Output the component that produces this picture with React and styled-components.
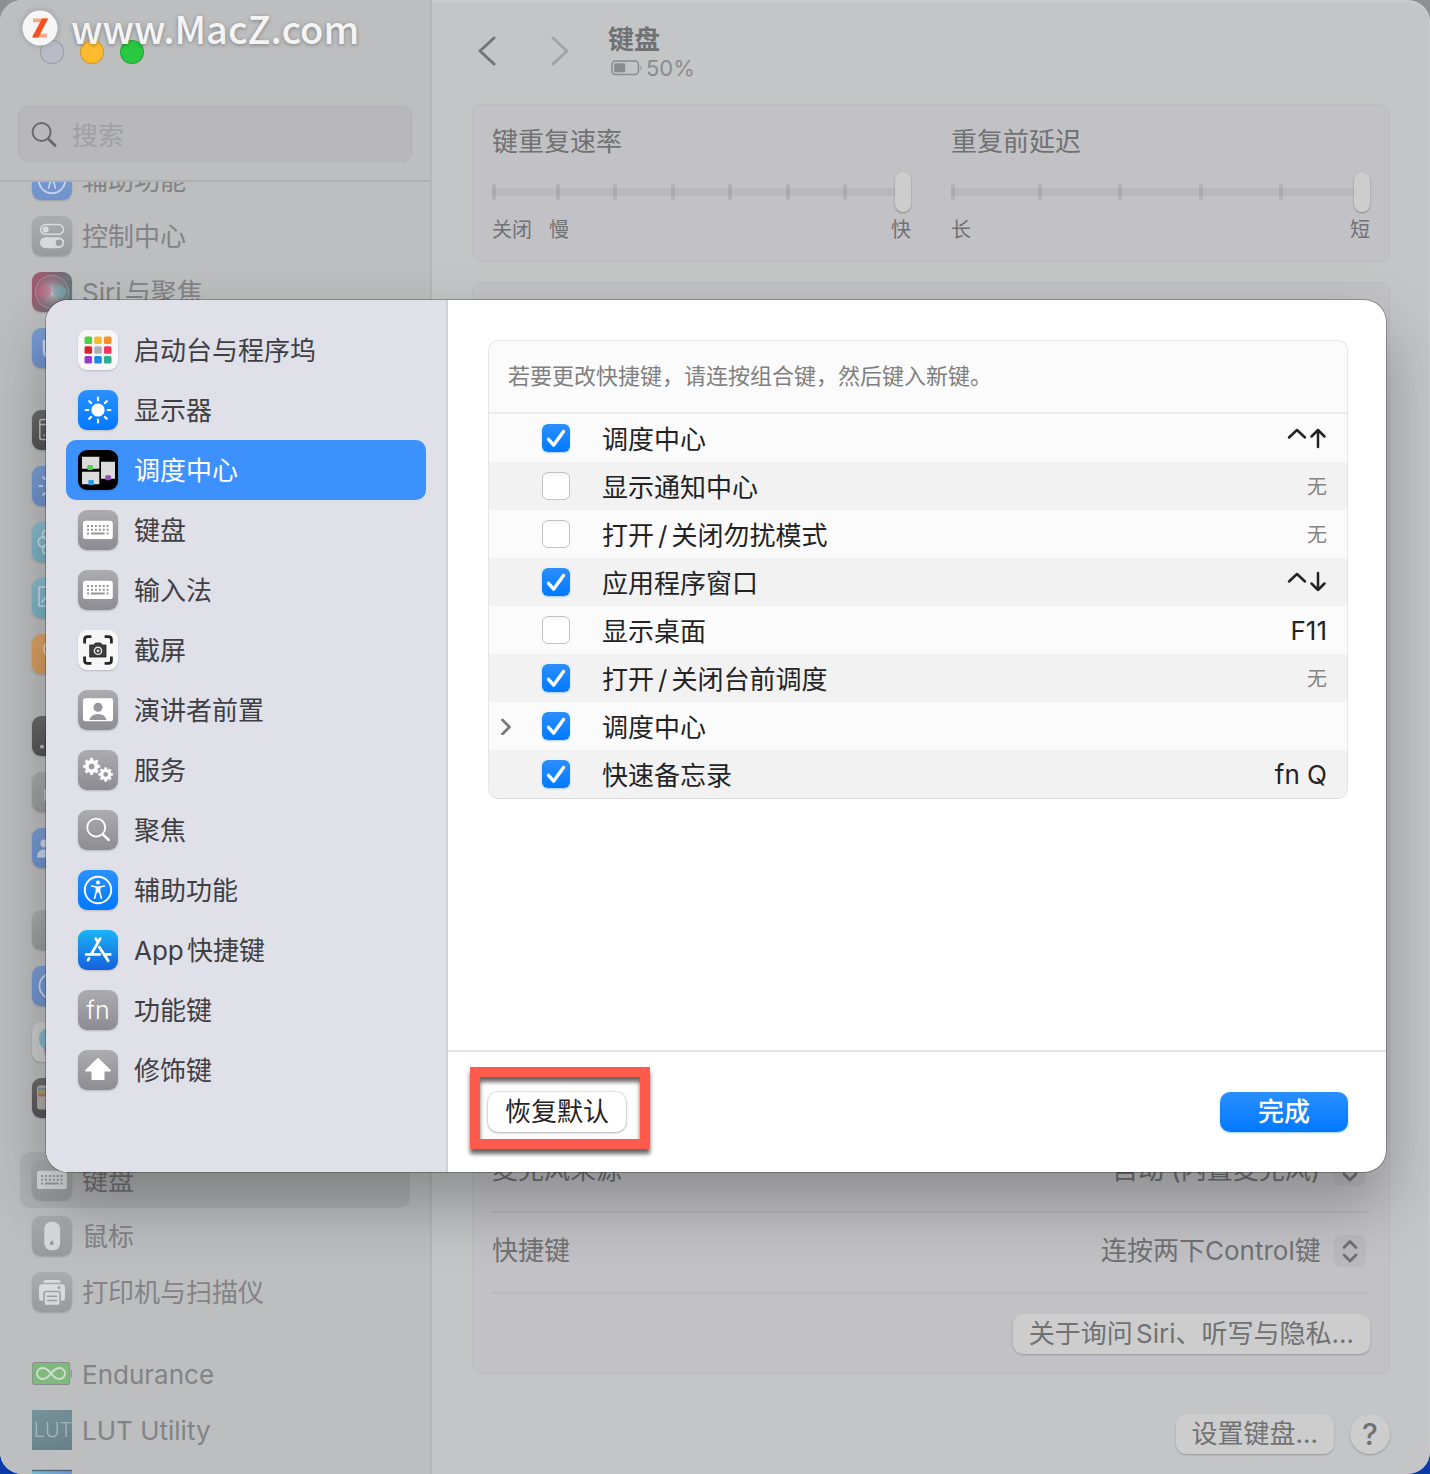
import React, { useState } from "react";
import styled, { createGlobalStyle, css } from "styled-components";

const GlobalStyle = createGlobalStyle`
  * {
    box-sizing: border-box;
  }
  body {
    margin: 0;
    background: linear-gradient(#8f9093, #8f9093 50%, #0a3aa8 50%, #0a3aa8);
    font-family: Inter, "Noto Sans CJK SC", sans-serif;
    font-size: 26px;
    line-height: 32px;
    text-autospace: normal;
  }
  button, input, select {
    font: inherit;
    color: inherit;
    margin: 0;
  }
  ul {
    list-style: none;
    margin: 0;
    padding: 0;
  }
`;

const Window = styled.div`
  position: relative;
  display: flex;
  height: 100vh;
  min-height: 900px;
  overflow: hidden;
  border-radius: 22px;
  background: #c4c5c7;
  box-shadow: inset 0 1px 0 1px rgba(255, 255, 255, 0.15);
`;

const SideBar = styled.aside`
  width: 432px;
  flex: none;
  display: flex;
  flex-direction: column;
  background: #bdbec0;
  border-right: 2px solid #b6b6ba;
`;

const SideHeader = styled.div`
  padding: 40px 18px 18px;
  border-bottom: 2px solid #b0b1b3;
`;

const Lights = styled.div`
  display: flex;
  gap: 16px;
  padding-left: 22px;
  margin-bottom: 42px;
`;

const Light = styled.button`
  width: 24px;
  height: 24px;
  padding: 0;
  border-radius: 50%;
  border: 1px solid rgba(0, 0, 0, 0.18);
  background: ${(p) => p.$color};
`;

const SearchBox = styled.label`
  display: flex;
  align-items: center;
  gap: 15px;
  height: 56px;
  padding: 0 12px;
  border-radius: 10px;
  border: 1px solid #b2b2b6;
  background: #b7b7bc;
  color: #68696b;
  input {
    flex: 1;
    min-width: 0;
    padding: 3px 0 0;
    border: 0;
    outline: 0;
    background: none;
  }
  input::placeholder {
    color: #a1a1a5;
    opacity: 1;
  }
`;

const SideScroll = styled.nav`
  flex: 1;
  min-height: 0;
  overflow: hidden;
  padding: 0 20px;
`;

const SideGroups = styled.div`
  display: flex;
  flex-direction: column;
  gap: 26px;
  margin-top: -30px;
`;

const SideLink = styled.a`
  display: flex;
  align-items: center;
  gap: 10px;
  height: 56px;
  padding: 0 12px;
  border-radius: 10px;
  color: #828385;
  text-decoration: none;
  white-space: nowrap;
  ${(p) =>
    p.$active &&
    css`
      background: #b0b1b3;
      color: #707173;
    `}
`;

const ItemName = styled.span`
  padding-top: 2px;
`;

const Tile = styled.span`
  flex: none;
  width: 40px;
  height: 40px;
  overflow: hidden;
  border-radius: ${(p) => (p.$square ? 0 : 9)}px;
  background: ${(p) => p.$bg};
  box-shadow: ${(p) => (p.$square ? "none" : "0 1px 2px rgba(0, 0, 0, 0.18)")};
  svg {
    display: block;
    opacity: ${(p) => (p.$dim ? 0.6 : 1)};
  }
`;

const Content = styled.main`
  flex: 1;
  min-width: 0;
  display: flex;
  flex-direction: column;
  padding: 0 40px 20px;
  color: #707173;
`;

const Toolbar = styled.header`
  display: flex;
  align-items: center;
  height: 104px;
`;

const NavButton = styled.button`
  width: 32px;
  height: 40px;
  padding: 0;
  border: 0;
  background: none;
  margin-right: ${(p) => p.$space}px;
  color: ${(p) => (p.disabled ? "#a2a3a5" : "#737476")};
  svg {
    display: block;
    margin: auto;
  }
`;

const Title = styled.h1`
  margin: 0;
  font-size: 26px;
  font-weight: 700;
  line-height: 32px;
`;

const Battery = styled.div`
  display: flex;
  align-items: center;
  gap: 3px;
  padding-left: 3px;
  font-size: 22px;
  line-height: 24px;
  color: #8a8b8d;
`;

const Card = styled.section`
  border: 1px solid #bbbcc0;
  border-radius: 10px;
  background: #c2c2c6;
`;

const SliderCard = styled(Card)`
  display: grid;
  grid-template-columns: 1fr 1fr;
  gap: 40px;
  padding: 20px 19px 18px;
  margin-bottom: 20px;
`;

const SliderName = styled.label`
  display: block;
  line-height: 34px;
  margin-bottom: 13px;
`;

const SliderBody = styled.div`
  display: grid;
  align-items: center;
  margin-bottom: 5px;
  > * {
    grid-area: 1 / 1;
  }
`;

const Ticks = styled.div`
  display: flex;
  justify-content: space-between;
  padding: 0 6px;
  i {
    width: 4px;
    height: 16px;
    border-radius: 2px;
    background: #b1b1b4;
  }
  i:first-child {
    margin: 0 6px 0 -6px;
  }
`;

const Range = styled.input`
  appearance: none;
  width: 100%;
  height: 40px;
  background: none;
  &::-webkit-slider-runnable-track {
    height: 8px;
    border-radius: 4px;
    background: rgba(0, 0, 0, 0.045);
  }
  &::-webkit-slider-thumb {
    appearance: none;
    width: 16px;
    height: 40px;
    margin-top: -16px;
    border-radius: 8px;
    background: #cdcdce;
    box-shadow: 0 1px 2px rgba(0, 0, 0, 0.3);
  }
`;

const Marks = styled.div`
  display: flex;
  gap: 17px;
  font-size: 20px;
  line-height: 26px;
  span:last-child {
    margin-left: auto;
  }
`;

const OptionsCard = styled(Card)`
  flex: 1;
  display: flex;
  flex-direction: column;
  justify-content: flex-end;
  padding: 0 19px;
`;

const OptionRow = styled.div`
  display: flex;
  align-items: center;
  justify-content: space-between;
  height: 81px;
  padding-bottom: 3px;
  border-bottom: 2px solid #b9b9bd;
  &:last-child {
    height: 79px;
    padding-bottom: 0;
    border-bottom: 0;
    justify-content: flex-end;
  }
`;

const Picker = styled.span`
  display: grid;
  align-items: center;
  justify-items: end;
  padding-right: 4px;
  > * {
    grid-area: 1 / 1;
  }
  select {
    appearance: none;
    height: 40px;
    padding: 0 45px 0 0;
    border: 0;
    background: none;
  }
`;

const Stepper = styled.span`
  width: 32px;
  height: 32px;
  border-radius: 7px;
  background: rgba(0, 0, 0, 0.04);
  pointer-events: none;
`;

const PushButton = styled.button`
  height: 40px;
  padding: 0 16px;
  border: 0;
  border-radius: 10px;
  line-height: 38px;
  white-space: nowrap;
  background: #cdcdce;
  box-shadow: 0 1px 2px rgba(0, 0, 0, 0.22);
`;

const HelpButton = styled(PushButton)`
  width: 40px;
  padding: 0;
  border-radius: 50%;
  font-size: 30px;
  font-weight: 500;
`;

const BottomBar = styled.footer`
  display: flex;
  justify-content: flex-end;
  gap: 16px;
  margin-top: 40px;
`;

const Overlay = styled.div`
  position: absolute;
  inset: 0;
  display: grid;
  padding: 300px 44px 302px 46px;
`;

const Sheet = styled.div`
  display: flex;
  overflow: hidden;
  border-radius: 22px;
  background: #fff;
  box-shadow: 0 0 0 1px rgba(0, 0, 0, 0.25), 0 32px 64px rgba(0, 0, 0, 0.28);
`;

const SheetSide = styled.nav`
  flex: none;
  width: 402px;
  padding: 20px;
  background: #e0e0e9;
  border-right: 2px solid #d0d0d8;
`;

const SheetTab = styled.button`
  display: flex;
  align-items: center;
  gap: 16px;
  width: 100%;
  height: 60px;
  padding: 0 12px;
  border: 0;
  border-radius: 10px;
  text-align: left;
  white-space: nowrap;
  background: ${(p) => (p.$active ? "#3c91fd" : "none")};
  color: ${(p) => (p.$active ? "#fff" : "#3f3f43")};
`;

const SheetMain = styled.div`
  flex: 1;
  min-width: 0;
  display: flex;
  flex-direction: column;
`;

const SheetBody = styled.div`
  flex: 1;
  padding: 40px 38px 40px 40px;
`;

const Shortcuts = styled.div`
  overflow: hidden;
  border: 1px solid #e6e6e6;
  border-bottom-color: #d9d9d9;
  border-radius: 10px;
  background: #fbfbfb;
`;

const Note = styled.p`
  margin: 0;
  padding: 19px 19px 20px;
  font-size: 22px;
  border-bottom: 2px solid #ececec;
  color: #7f7f7f;
`;

const ShortcutRow = styled.li`
  display: flex;
  align-items: center;
  height: 48px;
  padding-right: 20px;
  color: #232323;
  &:nth-child(even) {
    background: #f2f2f2;
  }
  label {
    flex: 1;
    padding: 3px 0 0 32px;
  }
`;

const Slash = styled.span`
  margin: 0 4px;
`;

const Disclosure = styled.span`
  flex: none;
  width: 53px;
  button {
    display: block;
    padding: 4px 8px;
    border: 0;
    background: none;
    color: #7b7b7b;
  }
  svg {
    display: block;
  }
`;

const Keys = styled.span`
  padding-top: 2px;
  font-size: ${(p) => (p.$none ? 20 : 26)}px;
  color: ${(p) => (p.$none ? "#848484" : "#232323")};
  svg {
    display: block;
  }
`;

const CheckBox = styled.span`
  display: grid;
  > * {
    grid-area: 1 / 1;
  }
  input {
    appearance: none;
    width: 28px;
    height: 28px;
    border-radius: 6px;
    border: 1px solid #c4c4c4;
    background: linear-gradient(#f4f4f4, #fff 20%);
  }
  input:checked {
    border: 0;
    background: linear-gradient(#2b8fff, #0079ff);
    box-shadow: 0 1px 2px rgba(0, 122, 255, 0.35);
  }
  svg {
    pointer-events: none;
  }
`;

const SheetFooter = styled.footer`
  display: flex;
  justify-content: space-between;
  padding: 40px 38px 40px 40px;
  border-top: 2px solid #e4e4e4;
`;

const Marked = styled.div`
  position: relative;
`;

const RedFrame = styled.span`
  position: absolute;
  inset: -25px -24px -17px -18px;
  border: 10px solid #ff5b4d;
  filter: drop-shadow(0 5px 2px rgba(0, 0, 0, 0.6));
  pointer-events: none;
`;

const SheetButton = styled(PushButton)`
  min-width: 138px;
  background: #fff;
  color: #232323;
  box-shadow: 0 0 0 1px rgba(0, 0, 0, 0.08), 0 1px 3px rgba(0, 0, 0, 0.25);
`;

const DoneButton = styled(PushButton)`
  width: 128px;
  color: #fff;
  font-weight: 500;
  background: linear-gradient(#2b8fff, #0079ff);
  box-shadow: 0 1px 2px rgba(0, 122, 255, 0.4);
`;

const Watermark = styled.div`
  position: absolute;
  top: 0;
  left: 22px;
  display: flex;
  align-items: center;
  gap: 13px;
  color: #f4f4f5;
  font-family: "Noto Sans CJK SC", sans-serif;
  font-size: 38px;
  font-weight: 500;
  line-height: 56px;
  text-shadow: 0 1px 4px rgba(0, 0, 0, 0.35);
  svg {
    filter: drop-shadow(0 0 3px rgba(0, 0, 0, 0.2));
  }
`;

const Svg = ({ children, size = 40, ...rest }) => (
  <svg
    width={size}
    height={size}
    viewBox={`0 0 ${size} ${size}`}
    fill="none"
    strokeLinecap="round"
    strokeLinejoin="round"
    aria-hidden="true"
    {...rest}
  >
    {children}
  </svg>
);

const launchColors = [
  "#4ccf45", "#f7b92f", "#f5902b",
  "#d5262b", "#aeb0b4", "#f1345a",
  "#963cc9", "#1b8be6", "#2fae8e",
];

const Launchpad = () => (
  <Svg>
    {launchColors.map((c, i) => (
      <rect key={c} x={6.5 + (i % 3) * 9.7} y={6.5 + Math.floor(i / 3) * 9.7} width="7.6" height="7.6" rx="1.6" fill={c} />
    ))}
  </Svg>
);

const Sun = () => (
  <Svg stroke="#fff" strokeWidth="2.2">
    <circle cx="20" cy="20" r="6.6" fill="#fff" stroke="none" />
    {[0, 45, 90, 135, 180, 225, 270, 315].map((a) => (
      <path key={a} d="M20 10.2V7.6" transform={`rotate(${a} 20 20)`} />
    ))}
  </Svg>
);

const Mission = () => (
  <Svg>
    <path d="M4 6.7h17.3v12H4zM4 21.7h17.3v12.6H4zM23 11.7h14v17H23z" fill="#dcdcdc" />
    <rect x="9.3" y="15" width="5.6" height="5" rx="1" fill="#4fd24b" />
    <rect x="10.3" y="30" width="5.6" height="5" rx="1" fill="#24a3ea" />
    <rect x="27.3" y="25.3" width="5.6" height="5" rx="1" fill="#9a4bc4" />
  </Svg>
);

const Keyboard = () => (
  <Svg>
    <rect x="5" y="10.8" width="29.8" height="18.2" rx="2.6" fill="#fff" />
    <g fill="#96969b">
      {[9.1, 13, 16.9, 20.8, 24.7, 28.6].map((x) => (
        <path key={x} d={`M${x} 15h2v2h-2zM${x} 18.7h2v2h-2z`} />
      ))}
      <path d="M9.1 22.6h2v2h-2zM13 22.6h13.6v2H13zM28.6 22.6h2v2h-2z" />
    </g>
  </Svg>
);

const Screenshot = () => (
  <Svg>
    <path
      d="M6.6 13.4V9.6q0-3 3-3h3.8M26.6 6.6h3.8q3 0 3 3v3.8M33.4 26.6v3.8q0 3-3 3h-3.8M13.4 33.4H9.6q-3 0-3-3v-3.8"
      stroke="#262626"
      strokeWidth="2.8"
      strokeLinecap="butt"
    />
    <path d="M12 15h4l1.3-2h5.4l1.3 2h4v12H12z" fill="#3c3c3c" stroke="#1c1c1c" strokeWidth=".8" />
    <circle cx="20" cy="20.8" r="3.6" stroke="#e8e8e8" strokeWidth="1.4" fill="#333" />
    <circle cx="20" cy="20.8" r="1.5" fill="#cfcfcf" />
  </Svg>
);

const Presenter = () => (
  <Svg>
    <rect x="5" y="8.3" width="30" height="23" rx="2.2" fill="#fff" />
    <circle cx="20" cy="17.3" r="4.5" fill="#97979c" />
    <path d="M11.4 30q1.6-6 8.6-6t8.6 6z" fill="#97979c" />
  </Svg>
);

const Gear = ({ x, y, r }) => (
  <g transform={`translate(${x} ${y})`}>
    <circle r={r * 0.56} stroke="#fff" strokeWidth={r * 0.42} />
    {[0, 45, 90, 135, 180, 225, 270, 315].map((a) => (
      <path key={a} d={`M-${r * 0.2} -${r * 0.65}L-${r * 0.15} -${r}H${r * 0.15}L${r * 0.2} -${r * 0.65}z`} fill="#fff" stroke="#fff" strokeWidth=".4" transform={`rotate(${a})`} />
    ))}
  </g>
);

const Gears = () => (
  <Svg>
    <Gear x={13.6} y={16.4} r={8.3} />
    <Gear x={27.7} y={24.4} r={7} />
  </Svg>
);

const Spotlight = () => (
  <Svg stroke="#fff">
    <circle cx="18.2" cy="17.6" r="9" strokeWidth="1.8" />
    <path d="M24.8 24.4l6 5.6" strokeWidth="2.4" />
  </Svg>
);

const Access = () => (
  <Svg>
    <circle cx="20" cy="20" r="13.2" stroke="#fff" strokeWidth="1.9" />
    <circle cx="20" cy="12.6" r="2" fill="#fff" />
    <path d="M13.6 16l4.8 1v4.2l-1.8 7M26.4 16l-4.8 1v4.2l1.8 7" stroke="#fff" strokeWidth="1.6" />
    <path d="M18 16.4h4v6h-4z" fill="#fff" />
  </Svg>
);

const AppStore = () => (
  <Svg stroke="#fff" strokeWidth="2.8">
    <path d="M22.2 8.6L13.6 23.6M11 28.4l-1 1.6M17.8 8.6l2 3.4M21.4 17.2l8.8 13.6" />
    <path d="M8.2 24.4h13.6M28 24.4h4.2" />
  </Svg>
);

const FnKey = () => (
  <Svg>
    <text x="20" y="28.5" textAnchor="middle" fill="#fff" fontFamily="Inter" fontWeight="300" fontSize="25">fn</text>
  </Svg>
);

const Shift = () => (
  <Svg>
    <path d="M20 9L32 20.6H25.6V29H14.4V20.6H8z" fill="#fff" stroke="#fff" strokeWidth="1.8" />
  </Svg>
);

const ControlCenter = () => (
  <Svg>
    <rect x="8.7" y="8.5" width="22.8" height="9.8" rx="4.9" stroke="#fff" strokeWidth="1.5" />
    <circle cx="13.7" cy="13.4" r="3" fill="#fff" />
    <rect x="8" y="21.2" width="24.2" height="11" rx="5.5" fill="#fff" />
    <circle cx="27" cy="26.7" r="3.3" fill="#9a9b9d" />
  </Svg>
);

const Siri = () => (
  <Svg>
    <defs>
      <radialGradient id="siri" cx=".5" cy=".5" r=".5">
        <stop offset="0" stopColor="#fff" />
        <stop offset=".4" stopColor="#e3dce2" stopOpacity=".6" />
        <stop offset="1" stopColor="#c090a4" stopOpacity=".15" />
      </radialGradient>
    </defs>
    <circle cx="20" cy="20" r="16.5" fill="url(#siri)" stroke="#d8d8dc" strokeOpacity=".6" />
    <path d="M20 19c3-9 11-8 15 0-4 10-11 9-15 0z" fill="#6fd0d4" fillOpacity=".6" />
    <path d="M20 19c-4-8-13-7-16 0 4 10 12 9 16 0z" fill="#ee5f8c" fillOpacity=".5" />
  </Svg>
);

const Hand = () => (
  <Svg>
    <path d="M12 13v9q0 8 8 8t8-7V13M16 18V9M20 18V8M24 18V9" stroke="#fff" strokeWidth="2.6" />
  </Svg>
);

const Desktop = () => (
  <Svg stroke="#fff" strokeWidth="1.5">
    <rect x="7.8" y="9.6" width="24" height="20" rx="2" />
    <path d="M8 14.4h24M12 25.2h.4M17 25.2h.4M22 25.2h.4" />
  </Svg>
);

const Flower = () => (
  <Svg stroke="#fff" strokeWidth="1.4">
    {[0, 60, 120, 180, 240, 300].map((a) => (
      <circle key={a} cx="20" cy="11.5" r="5.2" transform={`rotate(${a + 30} 20 20)`} />
    ))}
  </Svg>
);

const Saver = () => (
  <Svg stroke="#fff" strokeWidth="1.5">
    <rect x="7" y="9" width="26" height="19" />
    <path d="M10 24l5-6 5 6" />
  </Svg>
);

const Bulb = () => (
  <Svg stroke="#fff" strokeWidth="1.6">
    <path d="M12 15q0-7 8-7t8 7q0 4-4 8v6h-8v-6q-4-4-4-8z" />
  </Svg>
);

const Lock = () => (
  <Svg>
    <circle cx="10" cy="30.7" r="1.9" fill="#fff" />
    <circle cx="17" cy="30.7" r="1.9" fill="#fff" />
    <circle cx="24" cy="30.7" r="1.9" fill="#fff" />
  </Svg>
);

const Padlock = () => (
  <Svg>
    <rect x="12.4" y="17" width="15.2" height="12" rx="1.5" fill="#fff" />
    <path d="M15 17v-4q0-5 5-5t5 5v4" stroke="#fff" strokeWidth="2" />
  </Svg>
);

const Users = () => (
  <Svg>
    <circle cx="12.5" cy="15.5" r="4" fill="#fff" />
    <path d="M5 29.5q0-8 7.5-8 5 0 6.5 4v4z" fill="#fff" />
    <circle cx="25" cy="14" r="5" fill="#fff" />
  </Svg>
);

const KeyIcon = () => (
  <Svg>
    <circle cx="20" cy="13" r="6" fill="#fff" />
    <path d="M20 19v12" stroke="#fff" strokeWidth="3" />
  </Svg>
);

const AtSign = () => (
  <Svg stroke="#fff" strokeWidth="1.8">
    <circle cx="20" cy="20" r="12.6" />
    <circle cx="20" cy="20" r="5" />
  </Svg>
);

const GameCenter = () => (
  <Svg>
    <circle cx="19" cy="17" r="12" fill="#58a6c4" />
    <circle cx="21" cy="28" r="9" fill="#9864b0" />
  </Svg>
);

const Wallet = () => (
  <Svg>
    <rect x="5" y="7.5" width="30" height="24" rx="3" fill="#e6e2d4" />
    <path d="M6 9.5h29v3H6z" fill="#88b6c8" />
    <path d="M6 12.5h29v3H6z" fill="#e6c060" />
    <path d="M6 15.5h29v3H6z" fill="#c98f80" />
  </Svg>
);

const Mouse = () => (
  <Svg>
    <rect x="12.3" y="5.8" width="15.8" height="28.4" rx="7" fill="#fff" />
    <circle cx="19.7" cy="27.2" r="1.9" fill="#98999b" />
    <path d="M19.9 25.3l.9-1.2" stroke="#98999b" />
  </Svg>
);

const Printer = () => (
  <Svg>
    <path d="M11.3 10.8q0-2.8 2.8-2.8h11.8q2.8 0 2.8 2.8z" fill="#fff" />
    <rect x="7" y="12.2" width="26" height="16.6" rx="3.4" fill="#fff" />
    <circle cx="27" cy="15.7" r="1.4" fill="#9b9c9e" />
    <rect x="12" y="19.5" width="16.2" height="14" rx="2" fill="#fff" stroke="#9b9c9e" strokeWidth="1.5" />
    <path d="M15.5 24.2h9.2M15.5 28.4h9.2" stroke="#9b9c9e" strokeWidth="1.5" />
  </Svg>
);

const Endurance = () => (
  <Svg>
    <rect x=".7" y="8.5" width="37" height="22" rx="1.5" fill="#55b84e" stroke="#6c6d6f" />
    <path d="M39.3 16v7" stroke="#6c6d6f" />
    <path d="M19 19.5c-3-4-5.500-5.500-8.500-5.500a5.500 5.500 0 0 0 0 11c3 0 5.500-1.500 8.500-5.500s5.500-5.500 8.500-5.500a5.500 5.500 0 0 1 0 11c-3 0-5.500-1.500-8.500-5.500z" stroke="#e4f0e2" strokeWidth="1.8" />
  </Svg>
);

const Lut = () => (
  <Svg>
    <text x="21" y="26.5" textAnchor="middle" fill="#c4d4d8" fontFamily="Inter" fontWeight="300" fontSize="20">LUT</text>
  </Svg>
);

const Preview = () => (
  <Svg strokeLinecap="butt">
    <path d="M0 4.5h40" stroke="#3a3c40" strokeWidth="1.5" />
  </Svg>
);

const SearchIcon = () => (
  <Svg size={26} stroke="currentColor">
    <circle cx="10.6" cy="11" r="9" strokeWidth="2" />
    <path d="M17.5 18l6.5 6.5" strokeWidth="2.8" />
  </Svg>
);

const gray = "linear-gradient(#abacae, #999a9c)";
const blue = "linear-gradient(#7b9dd3, #6f92cd)";
const dark = "linear-gradient(#6c6c6e, #535355)";
const teal = "linear-gradient(#8cbccb, #79b1c4)";

// rows without a name stay under the sheet
const sideGroups = [
  [
    { icon: Access, bg: blue, name: "辅助功能" },
    { icon: ControlCenter, bg: gray, name: "控制中心" },
    { icon: Siri, bg: "linear-gradient(110deg, #a8576f, #7b6a76 50%, #55807f)", name: "Siri与聚焦" },
    { icon: Hand, bg: blue },
  ],
  [
    { icon: Desktop, bg: dark },
    { icon: Sun, bg: blue },
    { icon: Flower, bg: teal },
    { icon: Saver, bg: teal },
    { icon: Bulb, bg: "linear-gradient(#dba468, #d59a5b)" },
  ],
  [
    { icon: Lock, bg: dark },
    { icon: Padlock, bg: gray },
    { icon: Users, bg: blue },
  ],
  [
    { icon: KeyIcon, bg: gray },
    { icon: AtSign, bg: blue },
    { icon: GameCenter, bg: "#cbcccd" },
    { icon: Wallet, bg: dark },
  ],
  [
    { icon: Keyboard, bg: gray, name: "键盘", active: true },
    { icon: Mouse, bg: gray, name: "鼠标" },
    { icon: Printer, bg: gray, name: "打印机与扫描仪" },
  ],
  [
    { icon: Endurance, bg: "none", name: "Endurance", square: true },
    { icon: Lut, bg: "linear-gradient(160deg, #75939a, #688088)", name: "LUT Utility", square: true },
    { icon: Preview, bg: "linear-gradient(90deg, #7ab7cc, #6f93cc) 0 4px no-repeat", square: true },
  ],
];

const tileGray = "linear-gradient(#ababb0, #8c8c92)";
const tileBlue = "linear-gradient(#2c91ff, #0079ff)";
const tileWhite = "#f7f7f8";

const tabs = [
  { icon: Launchpad, bg: tileWhite, name: "启动台与程序坞" },
  { icon: Sun, bg: tileBlue, name: "显示器" },
  { icon: Mission, bg: "#000", name: "调度中心" },
  { icon: Keyboard, bg: tileGray, name: "键盘" },
  { icon: Keyboard, bg: tileGray, name: "输入法" },
  { icon: Screenshot, bg: tileWhite, name: "截屏" },
  { icon: Presenter, bg: tileGray, name: "演讲者前置" },
  { icon: Gears, bg: tileGray, name: "服务" },
  { icon: Spotlight, bg: tileGray, name: "聚焦" },
  { icon: Access, bg: tileBlue, name: "辅助功能" },
  { icon: AppStore, bg: "linear-gradient(#1bb4f6, #1560dc)", name: "App快捷键" },
  { icon: FnKey, bg: tileGray, name: "功能键" },
  { icon: Shift, bg: tileGray, name: "修饰键" },
];

const defaults = [
  { name: "调度中心", on: true, keys: "up" },
  { name: "显示通知中心", on: false, keys: "无" },
  { name: "打开/关闭勿扰模式", on: false, keys: "无" },
  { name: "应用程序窗口", on: true, keys: "down" },
  { name: "显示桌面", on: false, keys: "F11" },
  { name: "打开/关闭台前调度", on: true, keys: "无" },
  { name: "调度中心", on: true, keys: "", group: true },
  { name: "快速备忘录", on: true, keys: "fn Q" },
];

const arrows = {
  up: "M31 20V3M24.5 9.500L31 3l6.500 6.500",
  down: "M31 2v17M24.5 12.500L31 19l6.500-6.500",
};

const KeyCombo = ({ keys }) => {
  if (!arrows[keys]) return <Keys $none={keys === "无"}>{keys}</Keys>;
  return (
    <Keys>
      <svg width="40" height="24" viewBox="0 0 40 24" fill="none" stroke="currentColor" strokeWidth="2.5" strokeLinecap="round" strokeLinejoin="round" role="img" aria-label={keys === "up" ? "⌃↑" : "⌃↓"}>
        <path d="M2 10.500L10 3l8 7.500" />
        <path d={arrows[keys]} />
      </svg>
    </Keys>
  );
};

const ShortcutName = ({ name }) => {
  const [first, second] = name.split("/");
  if (!second) return name;
  return (
    <>
      {first}
      <Slash>/</Slash>
      {second}
    </>
  );
};

const Slider = ({ id, name, steps, marks }) => (
  <div>
    <SliderName htmlFor={id}>{name}</SliderName>
    <SliderBody>
      <Ticks>
        {Array.from({ length: steps }, (_, i) => (
          <i key={i} />
        ))}
      </Ticks>
      <Range id={id} type="range" min="1" max={steps} defaultValue={steps} />
    </SliderBody>
    <Marks>
      {marks.map((m) => (
        <span key={m}>{m}</span>
      ))}
    </Marks>
  </div>
);

const Option = ({ id, name, value }) => (
  <OptionRow>
    <label htmlFor={id}>{name}</label>
    <Picker>
      <select id={id} defaultValue={value}>
        <option>{value}</option>
      </select>
      <Stepper>
        <Svg size={32} stroke="currentColor" strokeWidth="2.8">
          <path d="M10 12.500L16 6.500l6 6M10 20l6 6 6-6" />
        </Svg>
      </Stepper>
    </Picker>
  </OptionRow>
);

const ShortcutSheet = () => {
  const [tab, setTab] = useState(2);
  const [rows, setRows] = useState(defaults);

  const toggle = (index) => {
    setRows((pre) => pre.map((r, i) => (i === index ? { ...r, on: !r.on } : r)));
  };

  return (
    <Overlay>
      <Sheet role="dialog">
        <SheetSide>
          {tabs.map(({ icon: Icon, bg, name }, i) => (
            <SheetTab key={name} type="button" $active={i === tab} onClick={() => setTab(i)}>
              <Tile $bg={bg}>
                <Icon />
              </Tile>
              <ItemName>{name}</ItemName>
            </SheetTab>
          ))}
        </SheetSide>
        <SheetMain>
          <SheetBody>
            <Shortcuts>
              <Note>若要更改快捷键，请连按组合键，然后键入新键。</Note>
              <ul>
                {rows.map((row, i) => (
                  <ShortcutRow key={i}>
                    <Disclosure>
                      {row.group && (
                        <button type="button" aria-label="展开">
                          <Svg size={18} stroke="currentColor" strokeWidth="2.8">
                            <path d="M5.500 3l7 7-7 7" />
                          </Svg>
                        </button>
                      )}
                    </Disclosure>
                    <CheckBox>
                      <input id={`key-${i}`} type="checkbox" checked={row.on} onChange={() => toggle(i)} />
                      {row.on && (
                        <Svg size={28} stroke="#fff" strokeWidth="3.4">
                          <path d="M6.500 15.300l5.200 5.800L21.500 7.500" />
                        </Svg>
                      )}
                    </CheckBox>
                    <label htmlFor={`key-${i}`}>
                      <ShortcutName name={row.name} />
                    </label>
                    <KeyCombo keys={row.keys} />
                  </ShortcutRow>
                ))}
              </ul>
            </Shortcuts>
          </SheetBody>
          <SheetFooter>
            <Marked>
              <SheetButton type="button" onClick={() => setRows(defaults)}>
                恢复默认
              </SheetButton>
              <RedFrame />
            </Marked>
            <DoneButton type="button">完成</DoneButton>
          </SheetFooter>
        </SheetMain>
      </Sheet>
    </Overlay>
  );
};

const App = () => {
  const [query, setQuery] = useState("");

  return (
    <>
      <GlobalStyle />
      <Window>
        <SideBar>
          <SideHeader>
            <Lights>
              <Light type="button" aria-label="关闭" $color="#b9bcc6" />
              <Light type="button" aria-label="最小化" $color="#febc2e" />
              <Light type="button" aria-label="缩放" $color="#28c840" />
            </Lights>
            <SearchBox>
              <SearchIcon />
              <input type="text" aria-label="搜索" placeholder="搜索" value={query} onChange={(e) => setQuery(e.target.value)} />
            </SearchBox>
          </SideHeader>
          <SideScroll>
            <SideGroups>
              {sideGroups.map((group, g) => (
                <ul key={g}>
                  {group.map(({ icon: Icon, bg, name, active, square }, i) => (
                    <li key={i}>
                      <SideLink href="#" $active={active}>
                        <Tile $bg={bg} $square={square} $dim>
                          <Icon />
                        </Tile>
                        {name && <ItemName>{name}</ItemName>}
                      </SideLink>
                    </li>
                  ))}
                </ul>
              ))}
            </SideGroups>
          </SideScroll>
        </SideBar>
        <Content>
          <Toolbar>
            <NavButton type="button" aria-label="后退" $space={40}>
              <Svg size={32} stroke="currentColor" strokeWidth="3">
                <path d="M22 2L8 15l14 13" />
              </Svg>
            </NavButton>
            <NavButton type="button" aria-label="前进" $space={32} disabled>
              <Svg size={32} stroke="currentColor" strokeWidth="3">
                <path d="M9 2l14 13L9 28" />
              </Svg>
            </NavButton>
            <div>
              <Title>键盘</Title>
              <Battery>
                <svg width="32" height="16" viewBox="0 0 32 16" fill="none" aria-hidden="true">
                  <rect x="1" y="1" width="26.5" height="13.5" rx="3.5" stroke="currentColor" strokeWidth="1.5" />
                  <rect x="3.2" y="3.2" width="11" height="9" rx="1.2" fill="currentColor" />
                  <path d="M29.5 5.500q2.400 2.200 0 4.600z" fill="currentColor" />
                </svg>
                50%
              </Battery>
            </div>
          </Toolbar>
          <SliderCard>
            <Slider id="rate" name="键重复速率" steps={8} marks={["关闭", "慢", "快"]} />
            <Slider id="delay" name="重复前延迟" steps={6} marks={["长", "短"]} />
          </SliderCard>
          <OptionsCard>
            <Option id="mic" name="麦克风来源" value="自动 (内置麦克风)" />
            <Option id="hotkey" name="快捷键" value="连按两下Control键" />
            <OptionRow>
              <PushButton type="button">关于询问Siri、听写与隐私…</PushButton>
            </OptionRow>
          </OptionsCard>
          <BottomBar>
            <PushButton type="button">设置键盘…</PushButton>
            <HelpButton type="button">?</HelpButton>
          </BottomBar>
        </Content>
        <ShortcutSheet />
        <Watermark>
          <Svg size={36}>
            <circle cx="18" cy="18" r="17.5" fill="#f6f6f6" />
            <path d="M11 8.500h14v3.800H11z" fill="#f9a58c" />
            <path d="M11 23.700h14v3.800H11z" fill="#f9a58c" />
            <path d="M20 8.500h6.200L16.400 27.500h-6.400z" fill="#f4511e" />
          </Svg>
          <span>www.MacZ.com</span>
        </Watermark>
      </Window>
    </>
  );
};

export default App;
